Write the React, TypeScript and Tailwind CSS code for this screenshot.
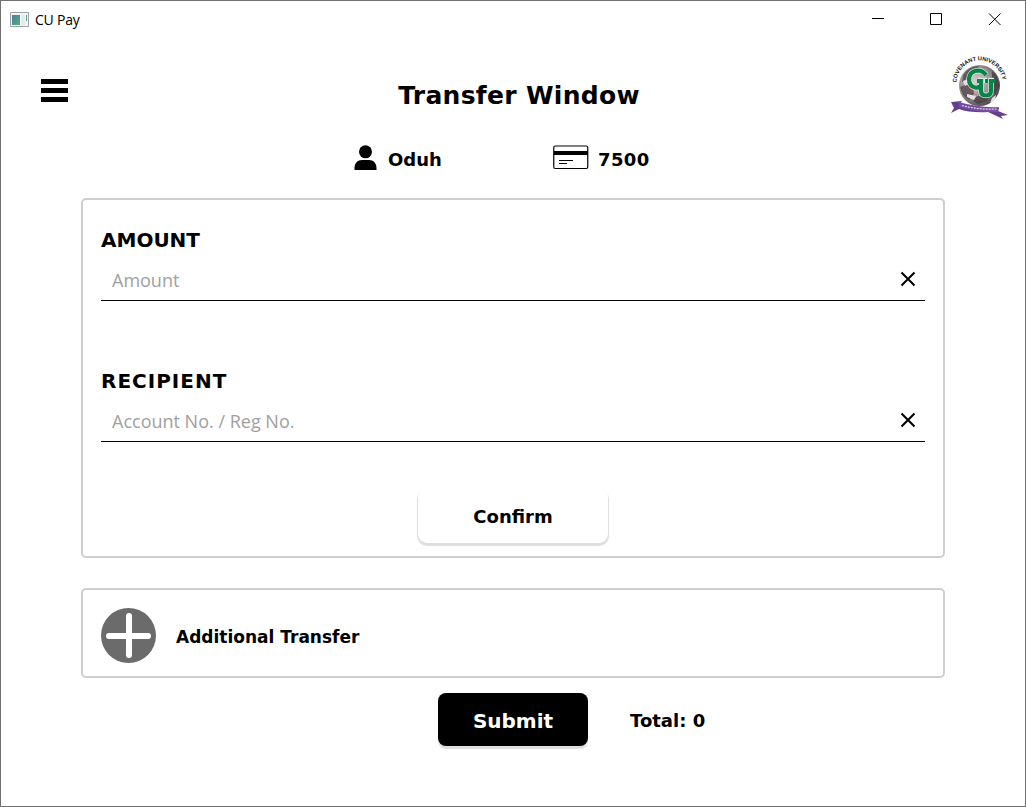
import type { ReactNode } from "react";

const heading = "font-['DejaVu_Sans',sans-serif] font-bold text-black whitespace-nowrap";

function Emblem() {
  return (
    <svg width="60" height="66" viewBox="0 0 60 66">
      <defs>
        <radialGradient id="globe" cx="0.38" cy="0.4" r="0.65">
          <stop offset="0" stopColor="#d9cfd2" />
          <stop offset="0.6" stopColor="#999194" />
          <stop offset="1" stopColor="#4b4448" />
        </radialGradient>
        <path id="arc" d="M6.500 28.500A22.900 22 0 0 1 52.500 28.500" />
      </defs>
      <circle cx="29.500" cy="31.500" r="20.500" fill="url(#globe)" />
      <path d="M13 21q6-9 16-9l-3 6-6 3-2 5-6 2zM10 33l7-3 6 4 1 6-5 6q-7-4-9-13z" fill="#4b4347" opacity=".75" />
      <path d="M42 17q7 6 7 15l-4 8-5-4 2-8zM27 42l12 1-2 4-9 3-5-3z" fill="#40383b" opacity=".7" />
      <path d="M13 27l5-2 2 4-5 3zM17 40l9 2-2 4-7-3zM42 44l4-3-1 5-5 3z" fill="#e8dfe2" />
      <path d="M19 33l5 1-2 3-4-1z" fill="#b43a4c" />
      <g fill="none" stroke="#d8eedf" strokeWidth="5.600">
        <path d="M36 21Q33 16.500 27.500 16.500Q19.500 17.500 19 25Q19 32 25 33.500Q28 34 30 32.500" />
        <path d="M28 26.500h3v10q0 5 5 5t5-5V26.500h3M34 26.500h3" />
      </g>
      <g fill="none" stroke="#078447" strokeWidth="4.200">
        <path d="M36 21Q33 16.500 27.500 16.500Q19.500 17.500 19 25Q19 32 25 33.500Q28 34 30 32.500" />
        <path d="M27 27h4v9.500q0 5 5 5t5-5V27h4M35 27h3" />
      </g>
      <path d="M1 48l11-1-3 4q20 5 40 3l-1 3 10 4-7 1 2 3-15-7q-18 1-29-3L1 59l3-5z" fill="#65418d" />
      <path d="M9 48q20 6 40 5l-1 5q-21 1-39-5z" fill="#794ea0" />
      <path d="M12 51.500q17 4.500 35 3.500" fill="none" stroke="#ddd0e8" strokeWidth="1.200" strokeDasharray="2 1" />
      <text className="font-['Liberation_Sans',sans-serif] font-bold" fontSize="5.700" fill="#111">
        <textPath href="#arc">COVENANT UNIVERSITY</textPath>
      </text>
    </svg>
  );
}

function Field({ label, placeholder, labelClass = "" }: { label: string; placeholder: string; labelClass?: string }) {
  return (
    <div className="h-[141px]">
      <div className={`${heading} h-[32px] pt-[1px] text-[20px] leading-[24px] ${labelClass}`}>{label}</div>
      <div className="flex h-[42px] items-center justify-between border-b border-black pr-[9px] pl-[11px]">
        <span className="pt-[1px] font-['Open_Sans','Noto_Sans',sans-serif] text-[18px] leading-6 text-[#a0a0a0]">{placeholder}</span>
        <svg className="-mt-[1px]" width="16" height="16" viewBox="0 0 16 16" stroke="#000" strokeWidth="2">
          <path d="M1.500 1.500l13 13M14.500 1.500l-13 13" />
        </svg>
      </div>
    </div>
  );
}

function Panel({ className, children }: { className: string; children: ReactNode }) {
  return <section className={`mx-[80px] rounded-[5px] border-2 border-[#cecece] px-[18px] ${className}`}>{children}</section>;
}

export default function App() {
  return (
    <main className="h-[807px] w-[1026px] overflow-hidden border border-[#707070] bg-white">
      <header className="flex h-[37px] items-center">
        <svg className="-mt-[1px] ml-[9px]" width="19" height="15" viewBox="0 0 19 15">
          <defs>
            <linearGradient id="screen" x1="0" x2="1" y2="1">
              <stop stopColor="#4d78a8" />
              <stop offset="1" stopColor="#56b26d" />
            </linearGradient>
          </defs>
          <path d="M.5.500h18v14H.5z" fill="#f4f5f6" stroke="#9aa1a8" />
          <path d="M2 3h8v10H2z" fill="url(#screen)" />
          <path d="M11 3h4v10h-4z" fill="#e5ebed" />
          <path d="M16 3h1v6h-1z" fill="#57a18b" />
        </svg>
        <span className="ml-[6px] font-['Open_Sans','Noto_Sans',sans-serif] text-[14px] tracking-[-0.2px] text-black">CU Pay</span>
        <svg className="-mt-[2px] mr-[24px] ml-auto" width="130" height="14" viewBox="0 0 130 14" fill="none" stroke="#000">
          <path d="M1 6.500h12M59.500 1.500h11v11h-11z" />
          <path d="M118 1.500l11.500 11.500M129.500 1.500L118 13" />
        </svg>
      </header>

      <div className="flex h-[94px] justify-between pr-[16px] pl-[40px]">
        <svg className="mt-[41px]" width="27" height="23" viewBox="0 0 27 23">
          <path d="M0 0h27v5H0zM0 9h27v5H0zM0 18h27v5H0z" />
        </svg>
        <h1 className={`${heading} mt-[42px] -ml-[10px] text-[25px] leading-8 tracking-[0.3px]`}>Transfer Window</h1>
        <div className="mt-[16px] -mr-[1px] -ml-[30px]"><Emblem /></div>
      </div>

      <div className="flex h-[66px] pt-[12px] pl-[353px]">
        <div className="flex w-[199px]">
          <svg className="mt-[1px]" width="23" height="26" viewBox="0 0 23 26">
            <circle cx="11.500" cy="6.800" r="6.500" />
            <path d="M.5 25v-2Q1 15 8 15h7q7 0 7.500 8v2z" />
          </svg>
          <span className={`${heading} mt-[4px] ml-[11px] text-[18px] leading-6`}>Oduh</span>
        </div>
        <svg className="mt-[1px]" width="36" height="25" viewBox="0 0 36 25">
          <rect x=".75" y="1" width="34" height="22.500" rx="1.500" fill="none" stroke="#000" strokeWidth="1.200" />
          <path d="M1 6h34v4H1z" />
          <path d="M6 15.500h14M6 18.500h8" stroke="#000" strokeWidth="1.200" />
        </svg>
        <span className={`${heading} mt-[4px] ml-[9px] text-[18px] leading-6 tracking-[0.4px]`}>7500</span>
      </div>

      <Panel className="h-[360px] pt-[27px]">
        <Field label="AMOUNT" placeholder="Amount" />
        <Field label="RECIPIENT" placeholder="Account No. / Reg No." labelClass="tracking-[1px]" />
        <button className={`${heading} mx-auto -mt-[21px] block h-[55px] w-[190px] rounded-[9px] bg-white pt-[2px] text-[18px] shadow-[0_2px_1px_1px_#dedede]`}>Confirm</button>
      </Panel>

      <Panel className="mt-[30px] flex h-[90px] pt-[18px]">
        <svg width="56" height="56" viewBox="0 0 56 56">
          <circle cx="27.500" cy="27.500" r="27.500" fill="#6b6b6b" />
          <path d="M28 8v39M8 28h39" stroke="#fff" strokeWidth="6" strokeLinecap="round" />
        </svg>
        <span className={`${heading} mt-[17px] ml-[19px] text-[17px] leading-6`}>Additional Transfer</span>
      </Panel>

      <div className="mt-[15px] flex pl-[437px]">
        <button className={`${heading} h-[53px] w-[150px] rounded-[8px] bg-black pt-[2px] text-[20px] text-white! shadow-[0_3px_1px_#dedede]`}>Submit</button>
        <span className={`${heading} mt-[16px] ml-[42px] text-[18px] leading-6`}>Total: 0</span>
      </div>
    </main>
  );
}
